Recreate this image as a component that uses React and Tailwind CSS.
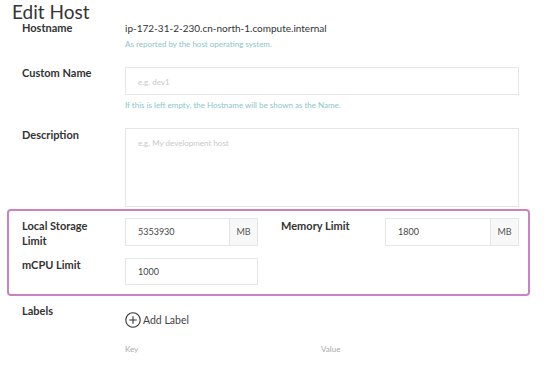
export default function App() {
  const font = { fontFamily: 'Lato, "Open Sans", sans-serif' };
  return (
    <div className="w-[549px] h-[382px] bg-white overflow-hidden text-[#333]" style={font}>
      <div className="pl-[12px] h-[21px] text-[19px] leading-[23px] text-[#333]">Edit Host</div>

      {/* Hostname */}
      <div className="flex">
        <div className="w-[103px] pl-[22px] shrink-0 box-content text-[11px] leading-[14px] font-bold">Hostname</div>
        <div className="flex flex-col">
          <div className="text-[10px] leading-[14px]">ip-172-31-2-230.cn-north-1.compute.internal</div>
          <div className="mt-[3px] text-[8px] leading-[12px] text-[#8cc5c9]">As reported by the host operating system.</div>
        </div>
      </div>

      {/* Custom Name */}
      <div className="flex mt-[17px]">
        <div className="w-[103px] pl-[22px] shrink-0 box-content text-[11px] leading-[14px] font-bold -mt-[1px]">Custom Name</div>
        <div className="flex flex-col w-[394px]">
          <div className="h-[28px] border border-[#e6e6e6] pl-[12px] pt-[8px] text-[8px] leading-[12px] text-[#c8c8c8]">
            <span>e.g. dev1</span>
          </div>
          <div className="mt-[4px] text-[8px] leading-[12px] text-[#8cc5c9]">If this is left empty, the Hostname will be shown as the Name.</div>
        </div>
      </div>

      {/* Description */}
      <div className="flex mt-[17px]">
        <div className="w-[103px] pl-[22px] shrink-0 box-content text-[11px] leading-[14px] font-bold">Description</div>
        <div className="w-[394px] h-[79px] border border-[#e6e6e6] pl-[12px] pt-[8px] text-[8px] leading-[12px] text-[#c8c8c8]">e.g. My development host</div>
      </div>

      {/* Limits box */}
      <div className="ml-[7px] mt-[2px] w-[523px] h-[87px] border-2 border-[#c983c2] rounded-[4px] pt-[7px] pl-[13px]">
        <div className="flex">
          <div className="w-[103px] shrink-0 text-[11px] leading-[15px] font-bold">Local Storage<br />Limit</div>
          <div className="w-[133px] h-[28px] border border-[#e6e6e6] flex">
            <div className="flex-1 flex items-center pl-[12px] text-[9px] text-[#444]">5353930</div>
            <div className="w-[28px] border-l border-[#e6e6e6] bg-[#f8f8f8] flex items-center justify-center text-[9px] text-[#555]">MB</div>
          </div>
          <div className="ml-[23px] w-[104px] shrink-0 text-[11px] leading-[15px] font-bold">Memory Limit</div>
          <div className="w-[134px] h-[28px] border border-[#e6e6e6] flex">
            <div className="flex-1 flex items-center pl-[12px] text-[9px] text-[#444]">1800</div>
            <div className="w-[28px] border-l border-[#e6e6e6] bg-[#f8f8f8] flex items-center justify-center text-[9px] text-[#555]">MB</div>
          </div>
        </div>
        <div className="flex mt-[10px]">
          <div className="w-[103px] shrink-0 text-[11px] leading-[15px] font-bold -mt-[1px]">mCPU Limit</div>
          <div className="w-[133px] h-[27px] border border-[#e6e6e6] flex items-center pl-[12px] text-[9px] text-[#444]">1000</div>
        </div>
      </div>

      {/* Labels */}
      <div className="flex mt-[8px]">
        <div className="w-[103px] pl-[22px] shrink-0 box-content text-[11px] leading-[14px] font-bold">Labels</div>
        <div className="flex flex-col">
          <div className="flex items-center mt-[7px] h-[17px]">
            <svg width="16" height="16" viewBox="0 0 16 16" fill="none" stroke="#333" strokeWidth="1.1">
              <circle cx="8" cy="8" r="7.2" />
              <path d="M8 4.2v7.6M4.2 8h7.6" />
            </svg>
            <span className="ml-[2px] text-[10.5px] leading-[14px] text-[#444]">Add Label</span>
          </div>
          <div className="flex mt-[15px] text-[8px] leading-[12px] text-[#aaa]">
            <div className="w-[196px]">Key</div>
            <div>Value</div>
          </div>
        </div>
      </div>
    </div>
  );
}
